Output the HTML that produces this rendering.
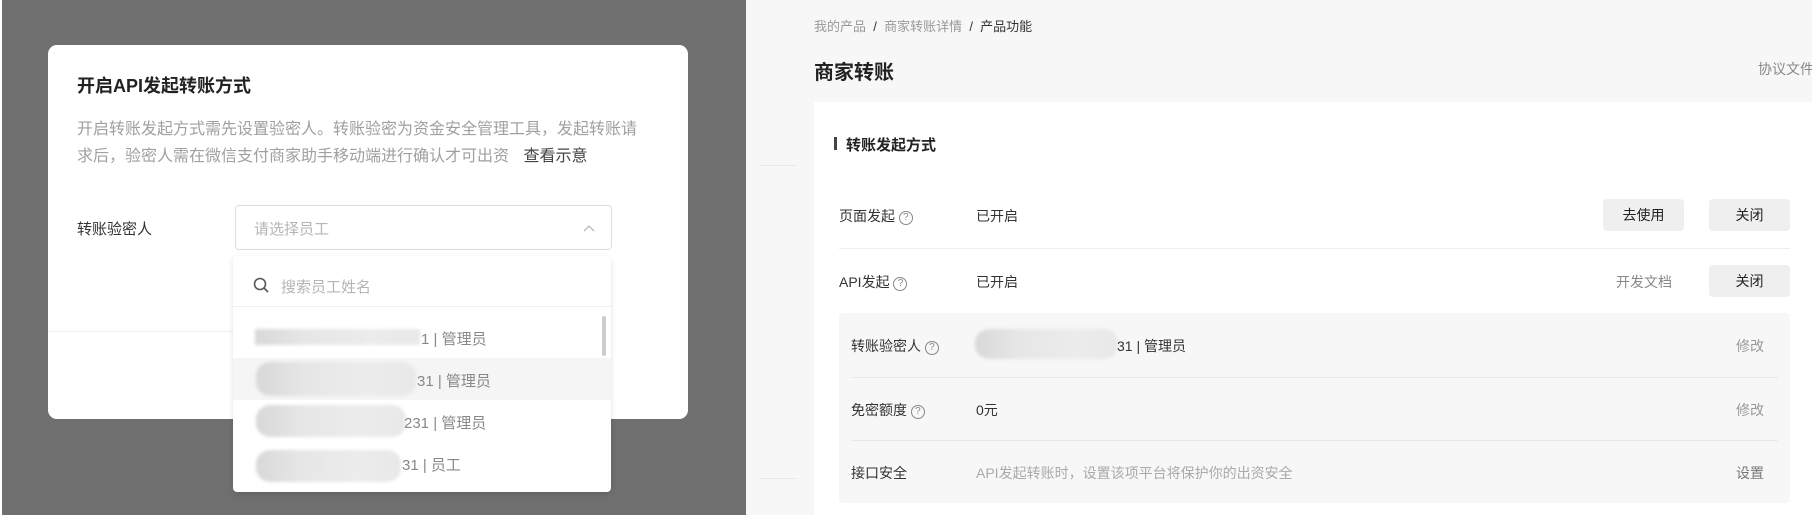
<!DOCTYPE html>
<html><head><meta charset="utf-8"><style>
*{margin:0;padding:0;box-sizing:border-box}
body{width:1812px;height:515px;overflow:hidden;position:relative;background:#fff;font-family:"Liberation Sans","Noto Sans CJK SC",sans-serif;color:#333}
.a{position:absolute;white-space:nowrap}
.blur{position:absolute;border-radius:14px;background:linear-gradient(90deg,#d8d8d8,#e6e6e6 30%,#ececec 70%,#e8e8e8);filter:blur(1.5px)}
.q{display:inline-block;width:14px;height:14px;border:1px solid #888;border-radius:50%;font-size:10px;line-height:12px;text-align:center;color:#888;vertical-align:1px}
</style></head><body>
<!-- left overlay -->
<div class="a" style="left:2px;top:0;width:744px;height:515px;background:#6f6f6f"></div>
<div class="a" style="left:48px;top:45px;width:640px;height:374px;background:#fff;border-radius:9px"></div>
<div class="a" style="left:77px;top:72px;font-size:18px;font-weight:bold;color:#222">开启API发起转账方式</div>
<div class="a" style="left:77px;top:116px;font-size:16px;line-height:27px;color:#a0a0a0;white-space:normal;width:572px">开启转账发起方式需先设置验密人。转账验密为资金安全管理工具，发起转账请求后，验密人需在微信支付商家助手移动端进行确认才可出资 <span style="color:#444;margin-left:10px">查看示意</span></div>
<div class="a" style="left:77px;top:218px;font-size:15px;color:#333">转账验密人</div>
<div class="a" style="left:235px;top:205px;width:377px;height:45px;border:1px solid #ddd;border-radius:4px"></div>
<div class="a" style="left:254px;top:218px;font-size:15px;color:#b5b5b5">请选择员工</div>
<svg class="a" style="left:582px;top:223px" width="14" height="10"><path d="M2 8 L7 3 L12 8" fill="none" stroke="#bbb" stroke-width="1.3"/></svg>
<div class="a" style="left:48px;top:331px;width:190px;height:1px;background:#eee"></div>
<div class="a" style="left:233px;top:256px;width:378px;height:236px;background:#fff;border-radius:4px;box-shadow:0 2px 6px rgba(0,0,0,.12)"></div>
<svg class="a" style="left:252px;top:276px" width="18" height="18"><circle cx="8" cy="8" r="5.5" fill="none" stroke="#555" stroke-width="1.6"/><path d="M12 12 L16 16" stroke="#555" stroke-width="1.6"/></svg>
<div class="a" style="left:281px;top:276px;font-size:15px;color:#b5b5b5">搜索员工姓名</div>
<div class="a" style="left:233px;top:306px;width:378px;height:1px;background:#eee"></div>
<div class="a" style="left:233px;top:358px;width:378px;height:42px;background:#f5f5f5"></div>
<div class="a" style="left:602px;top:316px;width:4px;height:40px;background:#ccc;border-radius:2px"></div>
<div class="blur" style="left:255px;top:329px;width:165px;height:16px;border-radius:0"></div>
<div class="a" style="left:421px;top:328px;font-size:15px;color:#888">1 | 管理员</div>
<div class="blur" style="left:256px;top:362px;width:160px;height:34px"></div>
<div class="a" style="left:417px;top:370px;font-size:15px;color:#888">31 | 管理员</div>
<div class="blur" style="left:256px;top:405px;width:150px;height:32px"></div>
<div class="a" style="left:404px;top:412px;font-size:15px;color:#888">231 | 管理员</div>
<div class="blur" style="left:256px;top:450px;width:145px;height:32px"></div>
<div class="a" style="left:402px;top:454px;font-size:15px;color:#888">31 | 员工</div>

<!-- right page -->
<div class="a" style="left:746px;top:0;width:1066px;height:515px;background:#f7f7f7"></div>
<div class="a" style="left:759px;top:165px;width:38px;height:1px;background:#e8e8e8"></div>
<div class="a" style="left:759px;top:478px;width:38px;height:1px;background:#e8e8e8"></div>
<div class="a" style="left:814px;top:16px;font-size:13px;color:#999">我的产品 <span style="color:#333">&nbsp;/&nbsp;</span> 商家转账详情 <span style="color:#333">&nbsp;/&nbsp; 产品功能</span></div>
<div class="a" style="left:814px;top:56px;font-size:20px;font-weight:bold;color:#222">商家转账</div>
<div class="a" style="left:1758px;top:59px;font-size:14px;color:#888">协议文件</div>
<div class="a" style="left:814px;top:102px;width:998px;height:413px;background:#fff"></div>
<div class="a" style="left:834px;top:137px;width:3px;height:13px;background:#444"></div>
<div class="a" style="left:846px;top:134px;font-size:15px;font-weight:bold;color:#222">转账发起方式</div>

<div class="a" style="left:839px;top:206px;font-size:14px;color:#333">页面发起 <span class="q">?</span></div>
<div class="a" style="left:976px;top:206px;font-size:14px;color:#333">已开启</div>
<div class="a" style="left:1603px;top:199px;width:81px;height:32px;background:#efefef;border-radius:4px;font-size:14px;line-height:32px;text-align:center;color:#222">去使用</div>
<div class="a" style="left:1709px;top:199px;width:81px;height:32px;background:#efefef;border-radius:4px;font-size:14px;line-height:32px;text-align:center;color:#222">关闭</div>
<div class="a" style="left:839px;top:248px;width:951px;height:1px;background:#eee"></div>

<div class="a" style="left:839px;top:272px;font-size:14px;color:#333">API发起 <span class="q">?</span></div>
<div class="a" style="left:976px;top:272px;font-size:14px;color:#333">已开启</div>
<div class="a" style="left:1616px;top:272px;font-size:14px;color:#888">开发文档</div>
<div class="a" style="left:1709px;top:265px;width:81px;height:32px;background:#efefef;border-radius:4px;font-size:14px;line-height:32px;text-align:center;color:#222">关闭</div>

<div class="a" style="left:839px;top:313px;width:951px;height:190px;background:#f7f7f7;border-radius:4px"></div>
<div class="a" style="left:851px;top:336px;font-size:14px;color:#333">转账验密人 <span class="q">?</span></div>
<div class="blur" style="left:975px;top:329px;width:143px;height:30px"></div>
<div class="a" style="left:1117px;top:336px;font-size:14px;color:#333">31 | 管理员</div>
<div class="a" style="left:1736px;top:336px;font-size:14px;color:#999">修改</div>
<div class="a" style="left:851px;top:377px;width:927px;height:1px;background:#e8e8e8"></div>
<div class="a" style="left:851px;top:400px;font-size:14px;color:#333">免密额度 <span class="q">?</span></div>
<div class="a" style="left:976px;top:400px;font-size:14px;color:#333">0元</div>
<div class="a" style="left:1736px;top:400px;font-size:14px;color:#999">修改</div>
<div class="a" style="left:851px;top:440px;width:927px;height:1px;background:#e8e8e8"></div>
<div class="a" style="left:851px;top:463px;font-size:14px;color:#333">接口安全</div>
<div class="a" style="left:976px;top:463px;font-size:14px;color:#aaa">API发起转账时，设置该项平台将保护你的出资安全</div>
<div class="a" style="left:1736px;top:463px;font-size:14px;color:#777">设置</div>
</body></html>
